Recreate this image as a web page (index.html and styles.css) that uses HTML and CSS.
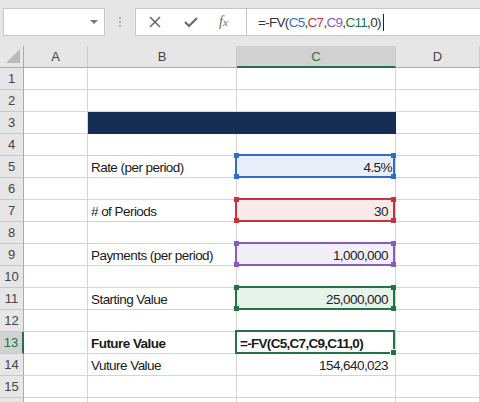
FILE: index.html
```html
<!DOCTYPE html>
<html>
<head>
<meta charset="utf-8">
<link rel="stylesheet" href="styles.css">
</head>
<body>
<div class="toolbar">
  <div class="namebox"><span class="arrow"></span></div>
  <div class="dots"><i></i><i></i><i></i></div>
  <div class="fbar">
    <div class="fbtns">
      <svg class="ico" width="14" height="14" viewBox="0 0 14 14"><path d="M2 2 L12 12 M12 2 L2 12" stroke="#6a6a6a" stroke-width="1.6" fill="none"/></svg>
      <svg class="ico" width="16" height="14" viewBox="0 0 16 14"><path d="M2 7 L6 11 L14 3" stroke="#6a6a6a" stroke-width="2.2" fill="none"/></svg>
      <span class="fx">f<small>x</small></span>
    </div>
    <div class="finput"><span>=-FV(</span><span class="c-blue">C5</span><span>,</span><span class="c-red">C7</span><span>,</span><span class="c-purple">C9</span><span>,</span><span class="c-green">C11</span><span>,0)</span><span class="caret"></span></div>
  </div>
</div>
<div class="sheet">
  <div class="ch corner"><svg width="24" height="21" viewBox="0 0 24 21"><polygon points="20,3 20,17 6,17" fill="#b9b9b9"/></svg></div>
  <div class="ch">A</div><div class="ch">B</div><div class="ch sel">C</div><div class="ch">D</div>

  <div class="rh">1</div><div class="c"></div><div class="c"></div><div class="c"></div><div class="c"></div>
  <div class="rh">2</div><div class="c"></div><div class="c"></div><div class="c"></div><div class="c"></div>
  <div class="rh">3</div><div class="c"></div><div class="c navy"></div><div class="c navy"></div><div class="c"></div>
  <div class="rh">4</div><div class="c"></div><div class="c"></div><div class="c"></div><div class="c"></div>
  <div class="rh">5</div><div class="c"></div><div class="c lbl">Rate (per period)</div><div class="c num pct f-blue">4.5%<span class="hl blue"><i class="tl"></i><i class="tr"></i><i class="bl"></i><i class="br"></i></span></div><div class="c"></div>
  <div class="rh">6</div><div class="c"></div><div class="c"></div><div class="c"></div><div class="c"></div>
  <div class="rh">7</div><div class="c"></div><div class="c lbl"># of Periods</div><div class="c num f-red">30<span class="hl red"><i class="tl"></i><i class="tr"></i><i class="bl"></i><i class="br"></i></span></div><div class="c"></div>
  <div class="rh">8</div><div class="c"></div><div class="c"></div><div class="c"></div><div class="c"></div>
  <div class="rh">9</div><div class="c"></div><div class="c lbl">Payments (per period)</div><div class="c num f-purple">1,000,000<span class="hl purple"><i class="tl"></i><i class="tr"></i><i class="bl"></i><i class="br"></i></span></div><div class="c"></div>
  <div class="rh">10</div><div class="c"></div><div class="c"></div><div class="c"></div><div class="c"></div>
  <div class="rh">11</div><div class="c"></div><div class="c lbl">Starting Value</div><div class="c num f-green">25,000,000<span class="hl green"><i class="tl"></i><i class="tr"></i><i class="bl"></i><i class="br"></i></span></div><div class="c"></div>
  <div class="rh">12</div><div class="c"></div><div class="c"></div><div class="c"></div><div class="c"></div>
  <div class="rh sel">13</div><div class="c"></div><div class="c lbl bold">Future Value</div><div class="c lbl bold formula">=-FV(C5,C7,C9,C11,0)<span class="hl active"><i class="br"></i></span></div><div class="c"></div>
  <div class="rh">14</div><div class="c"></div><div class="c lbl">Vuture Value</div><div class="c num">154,640,023</div><div class="c"></div>
  <div class="rh">15</div><div class="c"></div><div class="c"></div><div class="c"></div><div class="c"></div>
  <div class="rh"></div><div class="c"></div><div class="c"></div><div class="c"></div><div class="c"></div>
</div>
</body>
</html>
```

FILE: styles.css
```css
html, body {
  margin: 0;
  padding: 0;
}
body {
  width: 480px;
  height: 402px;
  overflow: hidden;
  background: #e6e6e6;
  font-family: "Liberation Sans", Arial, sans-serif;
  color: #1a1a1a;
}

/* ---------- formula bar ---------- */
.toolbar {
  height: 46px;
  box-sizing: border-box;
  padding: 8px 0 0 3px;
  display: flex;
  align-items: flex-start;
}
.namebox {
  width: 102px;
  height: 28px;
  box-sizing: border-box;
  background: #fff;
  border: 1px solid #c6c6c6;
  display: flex;
  align-items: center;
  justify-content: flex-end;
  padding-right: 6px;
}
.arrow {
  width: 0;
  height: 0;
  border-left: 4px solid transparent;
  border-right: 4px solid transparent;
  border-top: 4px solid #787878;
  margin-top: -1px;
}
.dots {
  width: 30px;
  height: 28px;
  display: flex;
  flex-direction: column;
  align-items: center;
  justify-content: center;
  gap: 2px;
}
.dots i {
  width: 2px;
  height: 2px;
  background: #b0b0b0;
}
.fbar {
  flex: 1;
  height: 28px;
  box-sizing: border-box;
  background: #fff;
  border: 1px solid #c6c6c6;
  border-right: none;
  display: flex;
}
.fbtns {
  width: 111px;
  box-sizing: border-box;
  border-right: 1px solid #c6c6c6;
  display: flex;
  align-items: center;
  padding-left: 12px;
  gap: 21px;
}
.fx {
  font-family: "Liberation Serif", "Times New Roman", serif;
  font-style: italic;
  font-size: 14px;
  color: #6a6a6a;
  margin-left: -1px;
}
.fx small {
  font-size: 11px;
}
.finput {
  flex: 1;
  display: flex;
  align-items: center;
  padding-left: 11px;
  font-size: 13.5px;
  letter-spacing: -0.7px;
  color: #333;
}
.c-blue { color: #3a6fc6; }
.c-red { color: #c6343c; }
.c-purple { color: #8a5bbf; }
.c-green { color: #227447; }
.caret {
  width: 1px;
  height: 17px;
  background: #222;
  margin-left: 2px;
}

/* ---------- sheet ---------- */
.sheet {
  display: grid;
  grid-template-columns: 24px 64px 149px 159px 84px;
  grid-auto-rows: 22px;
  background: #fff;
}
.sheet > div {
  box-sizing: border-box;
  position: relative;
}
.ch {
  background: #e6e6e6;
  border-right: 1px solid #c8c8c8;
  border-bottom: 1px solid #ababab;
  display: flex;
  align-items: center;
  justify-content: center;
  font-size: 13px;
  color: #444;
}
.ch.corner {
  border-right-color: #ababab;
  display: block;
}
.ch.corner svg { display: block; }
.ch.sel {
  background: #d2d2d2;
  border-bottom: 2px solid #217346;
  color: #217346;
}
.rh {
  background: #e6e6e6;
  border-right: 1px solid #ababab;
  border-bottom: 1px solid #c8c8c8;
  display: flex;
  align-items: center;
  justify-content: center;
  font-size: 13px;
  color: #444;
}
.rh.sel {
  background: #d2d2d2;
  border-right: 2px solid #217346;
  color: #217346;
}
.c {
  border-right: 1px solid #d4d4d4;
  border-bottom: 1px solid #d4d4d4;
  font-size: 13.5px;
  letter-spacing: -0.55px;
  display: flex;
  align-items: flex-end;
  line-height: 15px;
  padding-bottom: 2px;
  white-space: nowrap;
}
.c.navy {
  background: #142e53;
  border-color: #142e53;
}
.lbl {
  padding-left: 3px;
}
.bold { font-weight: bold; }
.formula { letter-spacing: -0.7px; }
.num {
  justify-content: flex-end;
  padding-right: 7px;
  color: #222;
}
.num.pct { padding-right: 3px; }

.f-blue { background: #e8eff9; }
.f-red { background: #f9e9e9; }
.f-purple { background: #f1eef8; }
.f-green { background: #e7f2ea; }

/* range highlight overlays */
.hl {
  position: absolute;
  top: -2px;
  left: -2px;
  right: 0;
  bottom: -1px;
  border: 2px solid currentColor;
  z-index: 2;
}
.hl i {
  position: absolute;
  width: 5px;
  height: 5px;
  background: currentColor;
}
.hl .tl { left: -3px; top: -3px; }
.hl .tr { right: -3px; top: -3px; }
.hl .bl { left: -3px; bottom: -3px; }
.hl .br { right: -3px; bottom: -3px; }
.hl.blue { color: #306dc7; }
.hl.red { color: #c5343c; }
.hl.purple { color: #8a5bbf; }
.hl.green { color: #227447; }
.hl.active { color: #217346; }
.hl.active .br { border: 1px solid #fff; width: 5px; height: 5px; right: -4px; bottom: -4px; }
```
